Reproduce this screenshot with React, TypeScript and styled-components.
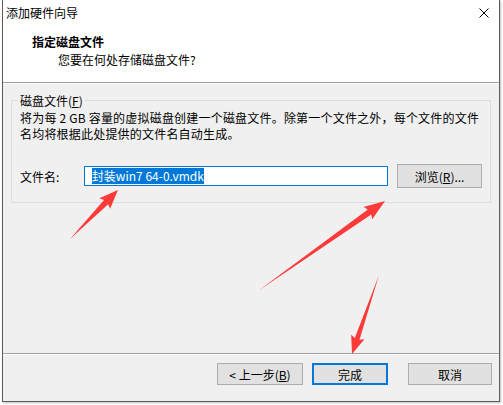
import React from "react";
import styled, { createGlobalStyle } from "styled-components";

const Global = createGlobalStyle`
  html, body { margin: 0; padding: 0; background: #ffffff; }
  body {
    font-family: "Microsoft YaHei UI", "Noto Sans CJK SC", "Noto Sans", sans-serif;
    font-size: 12px;
    color: #000;
  }
`;

const Page = styled.div`
  position: relative;
  width: 503px;
  height: 405px;
  overflow: hidden;
  background: #fff;
`;

const Window = styled.div`
  margin-left: 2px;
  width: 496px;
  height: 401px;
  display: flex;
  flex-direction: column;
  border: 1px solid #5b5b5b;
  border-top: none;
  box-shadow: 1px 1px 2px rgba(0, 0, 0, 0.25);
  background: #f0f0f0;
`;

const Header = styled.div`
  height: 82px;
  background: #fff;
  border-bottom: 1px solid #a0a0a0;
  display: flex;
  flex-direction: column;
`;

const TitleBar = styled.div`
  height: 26px;
  display: flex;
  align-items: center;
  justify-content: space-between;
  padding-left: 3px;
  padding-right: 10px;
  font-size: 12px;
  line-height: 14px;
`;

const HeaderTitle = styled.div`
  padding-left: 29px;
  font-weight: bold;
  font-size: 12px;
  line-height: 16px;
  margin-top: 8px;
`;

const HeaderSub = styled.div`
  padding-left: 55px;
  font-size: 12px;
  line-height: 16px;
  margin-top: 2px;
`;

const Content = styled.div`
  flex: 1;
  padding: 16px 8px 0 8px;
  border-top: 1px solid #fff;
`;

const Group = styled.div`
  position: relative;
  height: 92px;
  border: 1px solid #dcdcdc;
  padding: 9px 8px 0 8px;
  display: flex;
  flex-direction: column;
`;

const GroupLabel = styled.span`
  position: absolute;
  left: 6px;
  top: -8px;
  padding: 0 2px;
  background: #f0f0f0;
  line-height: 15px;
`;

const Desc = styled.div`
  line-height: 16px;
  letter-spacing: 0.2px;
  white-space: nowrap;
`;

const Row = styled.div`
  margin-top: 22px;
  display: flex;
  align-items: center;
`;

const FieldLabel = styled.span`
  width: 64px;
  line-height: 15px;
`;

const Input = styled.div`
  width: 296px;
  height: 18px;
  border: 1px solid #0078d7;
  background: #fff;
  padding-left: 7px;
  display: flex;
  align-items: center;
`;

const Selected = styled.span`
  background: #0078d7;
  color: #fff;
  line-height: 16px;
  white-space: pre;
`;

const Button = styled.div<{ $w: number; $h?: number; $primary?: boolean }>`
  box-sizing: border-box;
  width: ${(p) => p.$w}px;
  height: ${(p) => p.$h ?? 22}px;
  background: #e1e1e1;
  border: ${(p) => (p.$primary ? "2px solid #0078d7" : "1px solid #adadad")};
  display: flex;
  align-items: center;
  justify-content: center;
  line-height: 15px;
`;

const BrowseButton = styled(Button)`
  margin-left: 9px;
`;

const U = styled.span`
  text-decoration: underline;
  text-underline-offset: 1px;
`;

const Footer = styled.div`
  height: 38px;
  border-top: 1px solid #a0a0a0;
  box-shadow: inset 0 1px 0 #fff;
  display: flex;
  justify-content: flex-end;
  align-items: flex-start;
  padding: 9px 7px 0 0;
`;

const ButtonRow = styled.div`
  display: flex;
  gap: 9px;
`;

const CancelButton = styled(Button)`
  margin-left: 20px;
`;

const Overlay = styled.svg`
  position: absolute;
  left: 0;
  top: 0;
  pointer-events: none;
`;

type P = [number, number];

function arrowPoints(t: P, p: P, hl: number, hw: number, ws: number): string {
  const dx = p[0] - t[0];
  const dy = p[1] - t[1];
  const len = Math.hypot(dx, dy);
  const ux = dx / len;
  const uy = dy / len;
  const nx = -uy;
  const ny = ux;
  const bx = p[0] - ux * hl;
  const by = p[1] - uy * hl;
  const pts: P[] = [
    t,
    [bx + (nx * ws) / 2, by + (ny * ws) / 2],
    [bx - ux * 2 + (nx * hw) / 2, by - uy * 2 + (ny * hw) / 2],
    p,
    [bx - ux * 2 - (nx * hw) / 2, by - uy * 2 - (ny * hw) / 2],
    [bx - (nx * ws) / 2, by - (ny * ws) / 2],
  ];
  return pts.map((q) => `${q[0].toFixed(1)},${q[1].toFixed(1)}`).join(" ");
}

const CloseIcon = () => (
  <svg width="10" height="10" viewBox="0 0 10 10">
    <path d="M0.5 0.5 L9.5 9.5 M9.5 0.5 L0.5 9.5" stroke="#000" strokeWidth="1" fill="none" />
  </svg>
);

export default function App() {
  return (
    <Page>
      <Global />
      <Window>
        <Header>
          <TitleBar>
            <span>添加硬件向导</span>
            <CloseIcon />
          </TitleBar>
          <HeaderTitle>指定磁盘文件</HeaderTitle>
          <HeaderSub>您要在何处存储磁盘文件?</HeaderSub>
        </Header>
        <Content>
          <Group>
            <GroupLabel>
              磁盘文件(<U>F</U>)
            </GroupLabel>
            <Desc>
              将为每 2 GB 容量的虚拟磁盘创建一个磁盘文件。除第一个文件之外，每个文件的文件
              <br />
              名均将根据此处提供的文件名自动生成。
            </Desc>
            <Row>
              <FieldLabel>文件名:</FieldLabel>
              <Input>
                <Selected>封装win7 64-0.vmdk</Selected>
              </Input>
              <BrowseButton $w={85} $h={24}>
                浏览(<U>R</U>)...
              </BrowseButton>
            </Row>
          </Group>
        </Content>
        <Footer>
          <ButtonRow>
            <Button $w={86}>
              &lt; 上一步(<U>B</U>)
            </Button>
            <Button $w={76} $primary>
              完成
            </Button>
          </ButtonRow>
          <CancelButton $w={84}>取消</CancelButton>
        </Footer>
      </Window>
      <Overlay width="503" height="405" viewBox="0 0 503 405">
        <polygon fill="#fd3a3a" points={arrowPoints([70, 239], [118, 190], 17, 15, 6)} />
        <polygon fill="#fd3a3a" points={arrowPoints([258, 291], [385, 201], 19, 15, 6)} />
        <polygon fill="#fd3a3a" points={arrowPoints([379, 275], [352, 354], 16, 14, 5)} />
      </Overlay>
    </Page>
  );
}
